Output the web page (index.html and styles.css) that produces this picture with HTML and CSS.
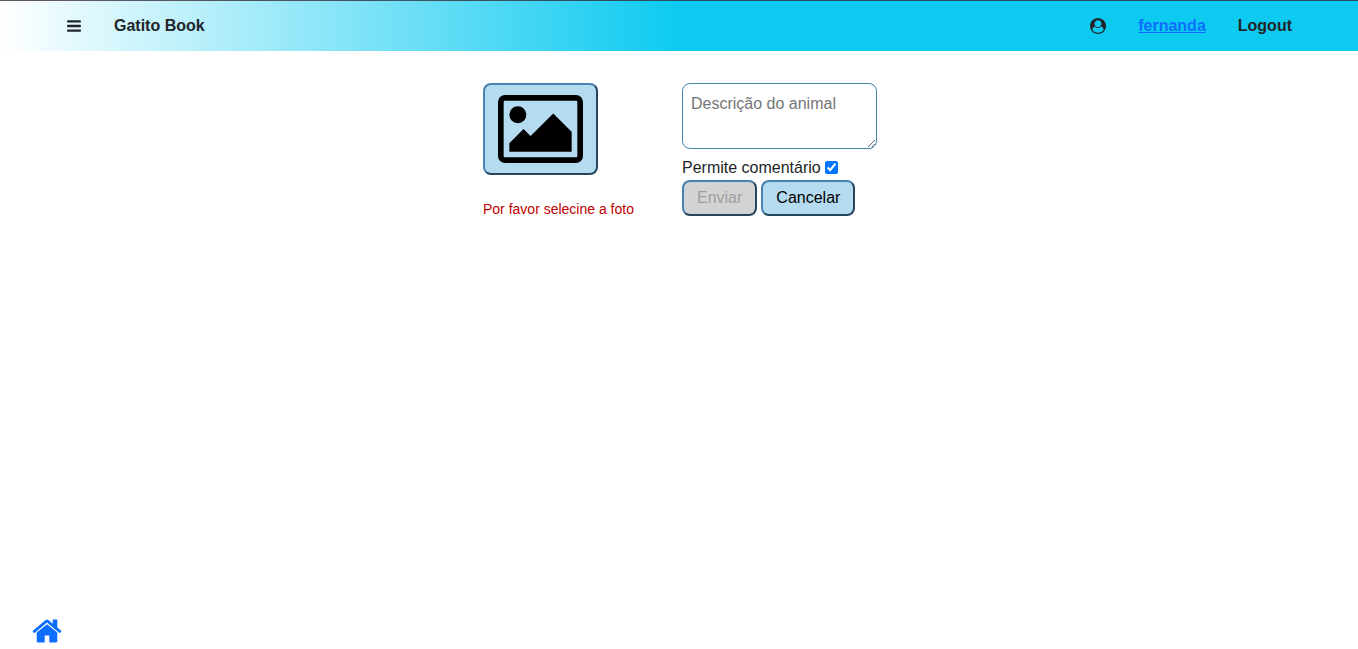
FILE: index.html
```
<!DOCTYPE html>
<html lang="pt-BR">
<head>
<meta charset="utf-8">
<title>Gatito Book</title>
<link rel="stylesheet" href="styles.css">
</head>
<body>
<header class="topbar">
  <div class="group">
    <button class="icon-button" type="button" aria-label="Menu">
      <svg class="icon" viewBox="0 0 1792 1792"><path d="M1664 1344v128q0 26-19 45t-45 19h-1408q-26 0-45-19t-19-45v-128q0-26 19-45t45-19h1408q26 0 45 19t19 45zm0-512v128q0 26-19 45t-45 19h-1408q-26 0-45-19t-19-45v-128q0-26 19-45t45-19h1408q26 0 45 19t19 45zm0-512v128q0 26-19 45t-45 19h-1408q-26 0-45-19t-19-45v-128q0-26 19-45t45-19h1408q26 0 45 19t19 45z"/></svg>
    </button>
    <span>Gatito Book</span>
  </div>
  <div class="group">
    <svg class="icon" viewBox="0 0 1792 1792" aria-hidden="true"><path d="M1523 1339q-22-155-87.500-257.500t-184.500-118.500q-67 74-159.500 115.500t-195.500 41.500-195.500-41.500-159.500-115.500q-119 16-184.500 118.500t-87.500 257.500q106 150 271 237.500t356 87.500 356-87.500 271-237.500zm-243-699q0-159-112.500-271.500t-271.500-112.500-271.500 112.500-112.500 271.500 112.500 271.500 271.500 112.500 271.500-112.500 112.500-271.500zm512 256q0 182-71 347.500t-190.500 286-285.500 191.500-349 71q-182 0-348-71t-286-191-191-286-71-348 71-348 191-286 286-191 348-71 348 71 286 191 191 286 71 348z"/></svg>
    <a class="user-link" href="#">fernanda</a>
    <button class="logout" type="button">Logout</button>
  </div>
</header>
<main>
  <form class="photo-form">
    <div class="photo">
      <button class="button" type="button" aria-label="Selecionar foto">
        <svg class="picture" viewBox="-64 0 1920 1792"><path d="M576 576q0 80-56 136t-136 56-136-56-56-136 56-136 136-56 136 56 56 136zm1024 384v448h-1408v-192l320-320 160 160 512-512zm96-704h-1600q-13 0-22.500 9.500t-9.500 22.500v1216q0 13 9.500 22.500t22.500 9.500h1600q13 0 22.500-9.500t9.500-22.500v-1216q0-13-9.500-22.500t-22.500-9.500zm160 32v1216q0 66-47 113t-113 47h-1600q-66 0-113-47t-47-113v-1216q0-66 47-113t113-47h1600q66 0 113 47t47 113z"/></svg>
      </button>
      <small class="error">Por favor selecine a foto</small>
    </div>
    <div class="details">
      <textarea class="description" aria-label="Descrição do animal" placeholder="Descrição do animal"></textarea>
      <div class="option"><label for="comments">Permite comentário</label><input class="check" id="comments" type="checkbox" checked></div>
      <div class="actions">
        <button class="button" type="submit" disabled>Enviar</button>
        <button class="button" type="button">Cancelar</button>
      </div>
    </div>
  </form>
</main>
<footer class="footer">
  <a class="home" href="#" aria-label="Início"><svg class="home-icon" viewBox="64 0 1664 1792"><path d="M1472 992v480q0 26-19 45t-45 19h-384v-384h-256v384h-384q-26 0-45-19t-19-45v-480q0-1 .5-3t.5-3l575-474 575 474q1 2 1 6zm223-69l-62 74q-8 9-21 11h-3q-13 0-21-7l-692-577-692 577q-12 8-24 7-13-2-21-11l-62-74q-8-10-7-23.500t11-21.500l719-599q32-26 76-26t76 26l244 204v-195q0-14 9-23t23-9h192q14 0 23 9t9 23v408l219 182q10 8 11 21.500t-7 23.500z"/></svg></a>
</footer>
</body>
</html>
```
FILE: styles.css
```
* {
  box-sizing: border-box;
}

body {
  margin: 0;
  min-height: 100vh;
  display: flex;
  flex-direction: column;
  background: #fff;
  color: #212529;
  font: 16px/24px "Liberation Sans", Arial, sans-serif;
}

button,
textarea {
  font: inherit;
}

.topbar {
  display: flex;
  justify-content: space-between;
  padding: 13px 66px;
  border-top: 1px solid rgba(50, 35, 45, 0.75);
  background: linear-gradient(to right, #fff, #0dcaf0 50%) border-box;
  font-weight: 700;
}

.group {
  display: flex;
  align-items: center;
  gap: 32px;
}

.icon-button,
.logout {
  display: flex;
  padding: 0;
  border: 0;
  background: none;
  color: inherit;
}

.icon {
  display: block;
  width: 16px;
  height: 16px;
  fill: #212529;
}

.user-link,
.home {
  color: #0d6efd;
}

.photo-form {
  display: flex;
  justify-content: center;
  gap: 48px;
  padding: 32px 0 0 2px;
}

.photo,
.details {
  display: flex;
  flex-direction: column;
  align-items: flex-start;
}

.photo {
  gap: 22px;
}

.button {
  padding: 4px 13px;
  border: 2px outset #4682b4;
  border-radius: 8px;
  background: #b5dbf0;
  color: #000;
}

.button:disabled {
  background: #d3d3d3;
  color: #a0a0a0;
}

.picture {
  display: block;
  width: 85px;
  height: 80px;
}

.error {
  font-size: 14px;
  color: #c00000;
}

.description {
  width: 195px;
  height: 66px;
  padding: 8px;
  border: 1px solid #4384a8;
  border-radius: 8px;
}

.description::placeholder {
  color: #757575;
}

.option {
  display: flex;
  align-items: center;
  gap: 4px;
  padding-top: 7px;
}

.check {
  width: 13px;
  height: 13px;
  margin: 0 0 2px;
  accent-color: #0075ff;
}

.actions {
  display: flex;
  gap: 4px;
}

.footer {
  margin-top: auto;
  padding: 0 32px 2px;
}

.home,
.home-icon {
  display: block;
  width: 30px;
  height: 32px;
}

.home-icon {
  fill: #0d6efd;
}
```
